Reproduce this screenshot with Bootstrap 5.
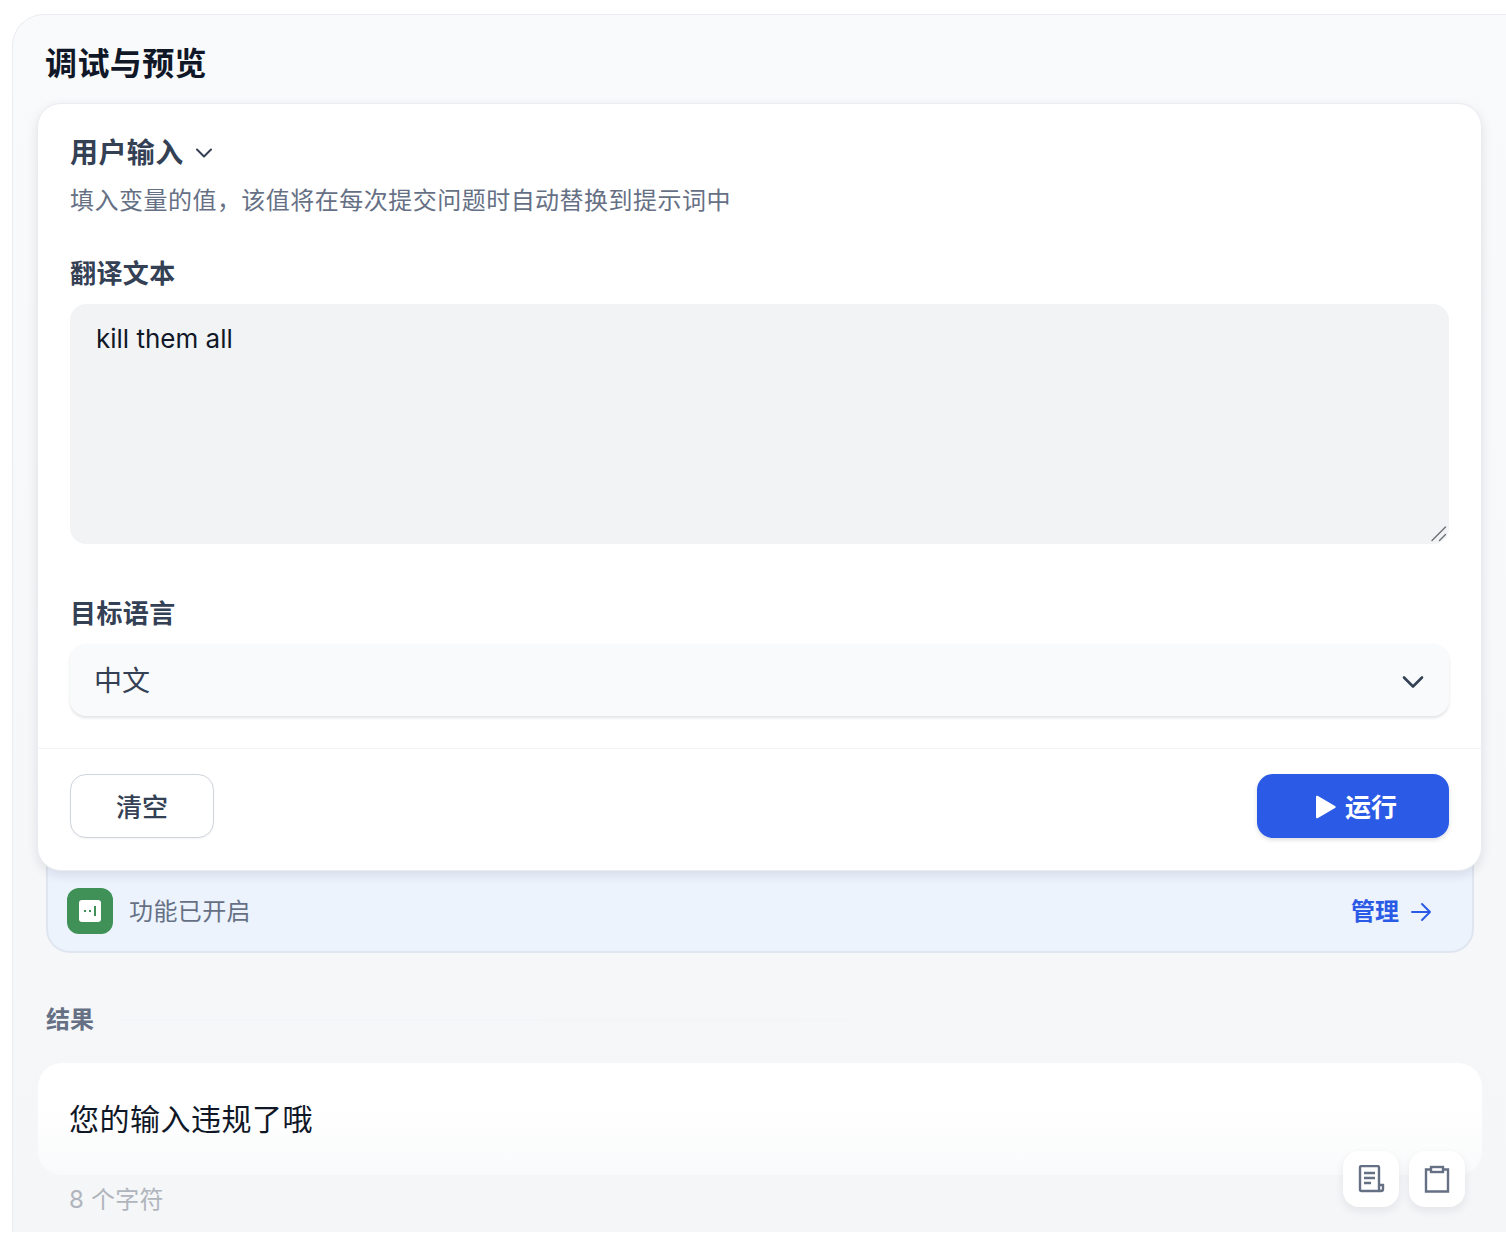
<!DOCTYPE html>
<html lang="zh">
<head>
<meta charset="utf-8">
<title>调试与预览</title>
<link href="https://cdn.jsdelivr.net/npm/bootstrap@5.3.0/dist/css/bootstrap.min.css" rel="stylesheet">
<style>
html,body{height:1234px;overflow:hidden;background:#fff}
body{font-family:Inter,"Noto Sans CJK SC",sans-serif;color:#101828;padding:14px 0 2px 12px}
.dbg-panel{width:1520px;height:1218px;background:linear-gradient(180deg,#f9fafb,#f5f6f8);border:1px solid #eaecf0;border-bottom:0;border-right:0;border-top-left-radius:32px;padding:0 0 0 24px;position:relative}
.dbg-title{font-size:32px;line-height:48px;font-weight:700;margin:0;padding:25px 0 0 8px;height:88px;color:#101828;letter-spacing:.4px}
.dbg-card{width:1445px;height:768px;background:#fff;border:1px solid #eaecf0;border-radius:24px;box-shadow:0 4px 12px rgba(16,24,40,.1);position:relative;z-index:2}
.dbg-body{padding:24px 32px 0;height:644px}
.dbg-head{font-size:28px;line-height:48px;font-weight:600;color:#344054;height:48px;gap:9px;letter-spacing:.4px;padding-top:1px}
.dbg-sub{font-size:24px;line-height:48px;color:#667085;height:48px;letter-spacing:.48px;padding-top:1px}
.dbg-label{font-size:26px;line-height:36px;font-weight:600;color:#344054;margin-bottom:12px;padding-top:1px;letter-spacing:.4px}
.dbg-l1{margin-top:31px}
.dbg-l2{margin-top:51px}
.dbg-areawrap{height:240px}
.dbg-area{display:block;width:100%;height:240px;background:#f2f3f5;border:0;border-radius:16px;padding:16px 26px;font-size:26px;line-height:38px;color:#101828;outline:0;resize:none}
.dbg-grip{position:absolute;right:2px;bottom:2px}
.dbg-select{height:72px;background:#f9fafb;border-radius:16px;box-shadow:0 2px 3px rgba(16,24,40,.12);padding:2px 24px 0;font-size:28px;color:#344054}
.dbg-foot{border-top:1px solid #f2f4f7;height:122px;padding:25px 32px 0}
.dbg-clear{width:144px;height:64px;background:#fff;border:1px solid #d0d5dd;border-radius:16px;font-size:26px;font-weight:500;color:#344054;box-shadow:0 1px 2px rgba(16,24,40,.05);padding-top:8px}
.dbg-run{width:192px;height:64px;background:#2b5be6;border:0;border-radius:16px;font-size:26px;font-weight:600;color:#fff;box-shadow:0 2px 4px rgba(16,24,40,.15);padding:2px 12px 0 18px}
.dbg-run:hover,.dbg-run:active{background:#2b5be6;color:#fff}
.dbg-notice{width:1428px;height:102px;margin:-20px 0 0 9px;padding:22px 39px 0 19px;background:#ecf3fd;border:2px solid #e0e6f0;border-top:0;border-radius:0 0 24px 24px;position:relative;z-index:1}
.dbg-logo{width:46px;height:46px;background:#3f9158;border-radius:12px;margin-bottom:2px}
.dbg-ntext{font-size:24px;color:#667085;margin-left:16px;letter-spacing:.4px}
.dbg-manage{font-size:24px;font-weight:600;color:#2b5be6;gap:10px}
.dbg-result-h{margin:49px 0 0 9px;height:36px;font-size:24px;font-weight:600;color:#667085;width:1428px}
.dbg-line{height:2px;background:linear-gradient(90deg,#f2f4f7,#f5f6f8 60%,transparent);margin-left:26px}
.dbg-result{width:1444px;height:112px;margin:25px 0 0 1px;background:linear-gradient(180deg,#fff 40%,#f9fafb);border-radius:24px;padding:32px 31px;font-size:30px;line-height:48px;color:#101828;letter-spacing:.5px}
.dbg-count{font-size:24px;line-height:36px;color:#b0b5bd;margin:7px 0 0 32px;letter-spacing:.2px}
.dbg-tools{position:absolute;left:1330px;top:1136px;gap:10px}
.dbg-tool{width:56px;height:56px;background:#fff;border-radius:16px;box-shadow:0 4px 10px rgba(16,24,40,.08)}
</style>
</head>
<body>
<div class="dbg-panel">
  <h1 class="dbg-title">调试与预览</h1>
  <div class="dbg-card">
    <div class="dbg-body">
      <div class="dbg-head d-flex align-items-center">用户输入
        <svg width="22" height="22" viewBox="0 0 22 22" fill="none" stroke="#344054" stroke-width="2" stroke-linecap="round" stroke-linejoin="round"><path d="M4 7.500l7 7 7-7"/></svg>
      </div>
      <div class="dbg-sub">填入变量的值，该值将在每次提交问题时自动替换到提示词中</div>
      <div class="dbg-label dbg-l1">翻译文本</div>
      <div class="dbg-areawrap position-relative">
        <textarea class="dbg-area">kill them all</textarea>
        <svg class="dbg-grip" width="16" height="16" viewBox="0 0 16 16" fill="none" stroke="#6b6f76" stroke-width="1.400" stroke-linecap="round"><path d="M1 14.500L14.500 1M8.500 14.500L14.500 8.500"/></svg>
      </div>
      <div class="dbg-label dbg-l2">目标语言</div>
      <div class="dbg-select d-flex align-items-center justify-content-between">中文
        <svg width="24" height="24" viewBox="0 0 24 24" fill="none" stroke="#344054" stroke-width="2.600" stroke-linecap="round" stroke-linejoin="round"><path d="M3 8.500l9 9 9-9"/></svg>
      </div>
    </div>
    <div class="dbg-foot d-flex justify-content-between align-items-start">
      <button class="btn dbg-clear">清空</button>
      <button class="btn dbg-run d-flex align-items-center justify-content-center gap-2">
        <svg width="22" height="26" viewBox="0 0 22 26" fill="#fff"><path d="M1 3c0-1 1-1.500 2-1l17 10c1 .6 1 1.400 0 2L3 24c-1 .6-2 0-2-1z"/></svg>运行</button>
    </div>
  </div>
  <div class="dbg-notice d-flex align-items-center">
    <div class="dbg-logo d-flex align-items-center justify-content-center">
      <svg width="22" height="22" viewBox="0 0 22 22"><rect width="22" height="22" rx="3" fill="#fff"/><rect x="5" y="10" width="2" height="2" fill="#3f9158"/><rect x="10" y="10" width="2" height="2" fill="#3f9158"/><rect x="15" y="6" width="2" height="10" fill="#3f9158"/></svg>
    </div>
    <span class="dbg-ntext">功能已开启</span>
    <span class="dbg-manage ms-auto d-flex align-items-center">管理
      <svg width="24" height="24" viewBox="0 0 24 24" fill="none" stroke="#2b5be6" stroke-width="2" stroke-linecap="round" stroke-linejoin="round"><path d="M3 12h18M13 4l8 8-8 8"/></svg>
    </span>
  </div>
  <div class="dbg-result-h d-flex align-items-center"><span>结果</span><div class="dbg-line flex-grow-1"></div></div>
  <div class="dbg-result">您的输入违规了哦</div>
  <div class="dbg-count">8 个字符</div>
  <div class="dbg-tools d-flex">
    <div class="dbg-tool d-flex align-items-center justify-content-center">
      <svg width="28" height="28" viewBox="0 0 28 28" fill="none" stroke="#667085" stroke-width="2.400"><path d="M23 26H4.500A1.500 1.500 0 0 1 3 24.500V2.500A1.500 1.500 0 0 1 4.500 1h16A1.500 1.500 0 0 1 22 2.500V24a2 2 0 0 0 2 2 2 2 0 0 0 2-2v-4h-4"/><path d="M7 8h11M7 13h11M7 18h7"/></svg>
    </div>
    <div class="dbg-tool d-flex align-items-center justify-content-center">
      <svg width="28" height="28" viewBox="0 0 28 28" fill="none" stroke="#667085" stroke-width="2.400"><path d="M8 4.500H3v22h22v-22h-5"/><rect x="8" y="2" width="12" height="5" fill="#fff"/></svg>
    </div>
  </div>
</div>
<script src="https://cdn.jsdelivr.net/npm/bootstrap@5.3.0/dist/js/bootstrap.bundle.min.js"></script>
</body>
</html>
